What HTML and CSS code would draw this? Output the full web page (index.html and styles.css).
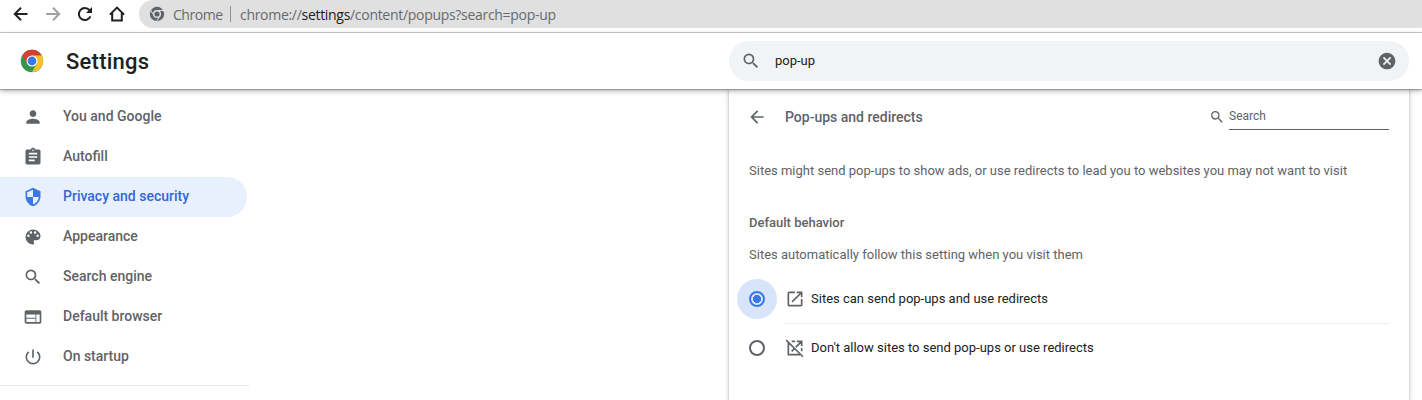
FILE: index.html
```html
<!DOCTYPE html>
<html lang="en">
<head>
<meta charset="utf-8">
<title>Settings - Pop-ups and redirects</title>
<link rel="stylesheet" href="styles.css">
</head>
<body>
<div class="toolbar">
  <svg class="nav-icon" viewBox="0 0 16 16"><path d="M14.5 8H2M8 1.8 1.8 8 8 14.2"/></svg>
  <svg class="nav-icon disabled" viewBox="0 0 16 16"><path d="M1.2 8h12.5M8 1.8 14.2 8 8 14.2"/></svg>
  <svg class="nav-icon" viewBox="0 0 16 16"><path d="M13.4 10.3A6 6 0 1 1 12.5 4.2L14 5.8"/><path class="solid" d="M15 1v6H9z"/></svg>
  <svg class="nav-icon" viewBox="0 0 16 16"><path d="M.9 8.6 8 1.6l7.1 7M3.2 7v7.4h9.6V7"/></svg>
  <div class="omnibox">
    <svg class="product" viewBox="0 0 16 16"><circle cx="8" cy="8" r="7.2"/><path d="M8 4.5H15M5 9.7 1.3 3.6M11 9.7 7.5 15.5"/><circle class="ring" cx="8" cy="8" r="3.3"/></svg>
    <span class="scheme-chip">Chrome</span>
    <span class="separator"></span>
    <span class="url">chrome://<b>settings</b>/content/popups?search=pop-up</span>
  </div>
</div>
<header class="header">
  <svg class="logo" viewBox="0 0 24 24">
    <circle cx="12" cy="12" r="11.2" fill="#33964b"/>
    <path d="M12 12 2.3 6.4A11.2 11.2 0 0 1 21.7 6.4z" fill="#d93f31"/>
    <path d="M12 6.6h9.8A11.2 11.2 0 0 1 12 23.2l4.7-8.5z" fill="#f8c12c"/>
    <path d="M2.3 6.4 7.3 14.7 12 12 11 6z" fill="#d93f31"/>
    <circle cx="12" cy="12" r="5.5" fill="#fff"/>
    <circle cx="12" cy="12" r="4.4" fill="#3978e8"/>
  </svg>
  <h1>Settings</h1>
  <div class="search-field">
    <svg class="icon" viewBox="0 0 24 24"><path d="M15.5 14h-.79l-.28-.27A6.47 6.47 0 0 0 16 9.5 6.5 6.5 0 1 0 9.5 16c1.61 0 3.09-.59 4.23-1.57l.27.28v.79l5 4.99L20.49 19l-4.99-5zm-6 0C7.01 14 5 11.99 5 9.5S7.01 5 9.5 5 14 7.01 14 9.5 11.99 14 9.5 14z"/></svg>
    <span class="query">pop-up</span>
    <svg class="icon" viewBox="0 0 24 24"><path d="M12 2C6.47 2 2 6.47 2 12s4.47 10 10 10 10-4.47 10-10S17.53 2 12 2zm5 13.59L15.59 17 12 13.41 8.41 17 7 15.59 10.59 12 7 8.41 8.41 7 12 10.59 15.59 7 17 8.41 13.41 12 17 15.59z"/></svg>
  </div>
</header>
<div class="main">
  <nav class="sidebar">
    <a class="item"><svg class="icon" viewBox="0 0 24 24"><path d="M12 12c2.21 0 4-1.79 4-4s-1.79-4-4-4-4 1.79-4 4 1.79 4 4 4zm0 2c-2.67 0-8 1.34-8 4v2h16v-2c0-2.66-5.33-4-8-4z"/></svg>You and Google</a>
    <a class="item"><svg class="icon" viewBox="0 0 24 24"><path d="M19 3h-4.18C14.4 1.84 13.3 1 12 1s-2.4.84-2.82 2H5c-1.1 0-2 .9-2 2v14c0 1.1.9 2 2 2h14c1.1 0 2-.9 2-2V5c0-1.1-.9-2-2-2zm-7 0c.55 0 1 .45 1 1s-.45 1-1 1-1-.45-1-1 .45-1 1-1zm2 14H7v-2h7v2zm3-4H7v-2h10v2zm0-4H7V7h10v2z"/></svg>Autofill</a>
    <a class="item selected"><svg class="icon" viewBox="0 0 24 24"><path d="M12 1 3 5v6c0 5.55 3.84 10.74 9 12 5.16-1.26 9-6.45 9-12V5l-9-4zm0 10.99h7c-.53 4.12-3.28 7.79-7 8.94V12H5V6.3l7-3.11v8.8z"/></svg>Privacy and security</a>
    <a class="item"><svg class="icon" viewBox="0 0 24 24"><path d="M12 3a9 9 0 0 0 0 18c.83 0 1.5-.67 1.5-1.5 0-.39-.15-.74-.39-1.01-.23-.26-.38-.61-.38-.99 0-.83.67-1.5 1.5-1.5H16c2.76 0 5-2.24 5-5 0-4.42-4.03-8-9-8zm-5.5 9a1.5 1.5 0 1 1 0-3 1.5 1.5 0 0 1 0 3zm3-4a1.5 1.5 0 1 1 0-3 1.5 1.5 0 0 1 0 3zm5 0a1.5 1.5 0 1 1 0-3 1.5 1.5 0 0 1 0 3zm3 4a1.5 1.5 0 1 1 0-3 1.5 1.5 0 0 1 0 3z"/></svg>Appearance</a>
    <a class="item"><svg class="icon" viewBox="0 0 24 24"><path d="M15.5 14h-.79l-.28-.27A6.47 6.47 0 0 0 16 9.5 6.5 6.5 0 1 0 9.5 16c1.61 0 3.09-.59 4.23-1.57l.27.28v.79l5 4.99L20.49 19l-4.99-5zm-6 0C7.01 14 5 11.99 5 9.5S7.01 5 9.5 5 14 7.01 14 9.5 11.99 14 9.5 14z"/></svg>Search engine</a>
    <a class="item"><svg class="icon" viewBox="0 0 24 24"><path d="M20 4H4c-1.1 0-1.99.9-1.99 2L2 18c0 1.1.9 2 2 2h16c1.1 0 2-.9 2-2V6c0-1.1-.9-2-2-2zm-5 14H4v-4h11v4zm0-5H4V9h11v4zm5 5h-4V9h4v9z"/></svg>Default browser</a>
    <a class="item"><svg class="icon" viewBox="0 0 24 24"><path d="M13 3h-2v10h2V3zm4.83 2.17-1.42 1.42A6.92 6.92 0 0 1 19 12a7 7 0 1 1-11.42-5.42L6.17 5.17A8.93 8.93 0 0 0 3 12a9 9 0 0 0 18 0c0-2.74-1.23-5.18-3.17-6.83z"/></svg>On startup</a>
    <div class="menu-divider"></div>
  </nav>
  <main class="panel">
    <div class="title-row">
      <svg class="icon back" viewBox="0 0 24 24"><path d="M20 11H7.83l5.59-5.59L12 4l-8 8 8 8 1.41-1.41L7.83 13H20v-2z"/></svg>
      <h2>Pop-ups and redirects</h2>
      <svg class="icon small" viewBox="0 0 24 24"><path d="M15.5 14h-.79l-.28-.27A6.47 6.47 0 0 0 16 9.5 6.5 6.5 0 1 0 9.5 16c1.61 0 3.09-.59 4.23-1.57l.27.28v.79l5 4.99L20.49 19l-4.99-5zm-6 0C7.01 14 5 11.99 5 9.5S7.01 5 9.5 5 14 7.01 14 9.5 11.99 14 9.5 14z"/></svg>
      <div class="site-search">Search</div>
    </div>
    <p class="description">Sites might send pop-ups to show ads, or use redirects to lead you to websites you may not want to visit</p>
    <h3>Default behavior</h3>
    <p class="hint">Sites automatically follow this setting when you visit them</p>
    <div class="options">
      <div class="option ruled">
        <span class="halo active"><span class="radio checked"></span></span>
        <div class="option-label"><svg class="icon" viewBox="0 0 24 24"><path d="M19 19H5V5h7V3H5a2 2 0 0 0-2 2v14a2 2 0 0 0 2 2h14c1.1 0 2-.9 2-2v-7h-2v7zM14 3v2h3.59l-9.83 9.83 1.41 1.41L19 6.41V10h2V3h-7z"/></svg><span>Sites can send pop-ups and use redirects</span></div>
      </div>
      <div class="option">
        <span class="halo"><span class="radio"></span></span>
        <div class="option-label"><svg class="icon stroke" viewBox="0 0 24 24"><path d="M4 6v14h14M8 4h4M20 12v4M14 4h6v6M20 4l-7 7M11 13l-3 3M1.5 2.5l20 20"/></svg><span>Don't allow sites to send pop-ups or use redirects</span></div>
      </div>
    </div>
  </main>
</div>
</body>
</html>
```
FILE: styles.css
```css
* { box-sizing: border-box; }
body {
  margin: 0;
  height: 400px;
  overflow: hidden;
  display: flex;
  flex-direction: column;
  background: #fff;
  color: #202124;
  font: 13px/20px Roboto, "Liberation Sans", sans-serif;
}
h1, h2, h3, p { margin: 0; }

.toolbar {
  flex: none;
  height: 33px;
  display: flex;
  align-items: flex-start;
  gap: 16px;
  padding-left: 13px;
  border-bottom: 1px solid #c9cacb;
}
.nav-icon {
  flex: none;
  width: 16px;
  height: 16px;
  margin-top: 6px;
  fill: none;
  stroke: #202124;
  stroke-width: 2;
}
.nav-icon.disabled { stroke: #a0a1a2; }
.nav-icon .solid { fill: #202124; stroke: none; }
.omnibox {
  flex: 1;
  height: 28px;
  margin-left: -2px;
  padding-left: 10px;
  display: flex;
  align-items: center;
  border-radius: 14px 0 0 14px;
  background: #e0e0e0;
  color: #666a6e;
  font: 14px/20px "Open Sans", "Noto Sans", sans-serif;
}
.product { width: 16px; height: 16px; margin-right: 8px; fill: #5f6368; stroke: #e0e0e0; stroke-width: 1; }
.product > circle:first-child { stroke: none; }
.product .ring { stroke-width: 1.4; }
.scheme-chip { width: 57px; padding-top: 1px; letter-spacing: -.45px; }
.separator { width: 1px; height: 16px; margin-right: 9px; background: #909294; }
.url { padding-top: 1px; letter-spacing: -.3px; }
.url b { font-weight: 400; color: #202124; }

.header {
  flex: none;
  position: relative;
  z-index: 1;
  height: 56px;
  display: flex;
  align-items: center;
  padding: 0 13px 0 20px;
  background: #fff;
  box-shadow: 0 1px 1px rgba(0, 0, 0, .2), 0 2px 5px rgba(0, 0, 0, .32);
}
.logo { width: 24px; height: 24px; margin-right: 22px; }
h1 { flex: 1; padding-top: 1px; font-size: 22px; font-weight: 500; letter-spacing: .25px; line-height: 28px; }
.icon { flex: none; width: 20px; height: 20px; fill: #5f6368; }
.search-field {
  width: 680px;
  height: 40px;
  display: flex;
  align-items: center;
  padding: 0 12px;
  border-radius: 20px;
  background: #f1f3f4;
}
.query { flex: 1; margin-left: 14px; }

.main { flex: 1; display: flex; justify-content: space-between; padding-right: 13px; }
.sidebar { width: 249px; padding-top: 8px; }
.item {
  width: 247px;
  height: 40px;
  display: flex;
  align-items: center;
  gap: 20px;
  padding: 0 0 2px 23px;
  border-radius: 0 20px 20px 0;
  color: #5f6368;
  font-size: 14px;
  font-weight: 500;
}
.item .icon { margin-top: 2px; }
.item.selected { background: #e8f0fe; color: #3367d6; }
.item.selected .icon { fill: #3b78e7; }
.menu-divider { height: 1px; margin-top: 8px; background: #e8e8e8; }

.panel {
  width: 680px;
  padding: 8px 20px 0;
  box-shadow: 0 1px 2px rgba(60, 64, 67, .35), 0 1px 5px 1px rgba(60, 64, 67, .16);
  color: #5f6368;
}
.title-row { height: 40px; display: flex; align-items: center; }
.back { margin: 0 18px 0 -2px; }
h2 { flex: 1; font-size: 14px; line-height: 20px; font-weight: 500; }
.small { width: 16px; height: 16px; margin-right: 4px; }
.site-search {
  width: 160px;
  height: 24px;
  margin-top: 2px;
  border-bottom: 1px solid #5f6368;
  font-size: 12px;
  line-height: 21px;
}
.description { margin-top: 24px; }
h3 { margin-top: 32px; font-size: 13px; font-weight: 500; }
.hint { margin-top: 12px; }
.options { padding-top: 10px; }
.option { height: 48px; display: flex; align-items: center; }
.option.ruled { height: 49px; }
.halo {
  width: 40px;
  height: 40px;
  margin: 0 8px 0 -12px;
  display: grid;
  place-items: center;
  border-radius: 50%;
}
.halo.active { margin-bottom: 1px; background: #d8e4fa; }
.radio { width: 16px; height: 16px; border: 2px solid #5f6368; border-radius: 50%; }
.radio.checked { border-color: #3b78e7; background: radial-gradient(circle, #3b78e7 3.8px, transparent 4.3px); }
.option-label { flex: 1; height: 100%; display: flex; align-items: center; gap: 6px; color: #202124; }
.ruled .option-label { border-bottom: 1px solid #ececec; }
.icon.stroke { fill: none; stroke: #5f6368; stroke-width: 2; }
```
